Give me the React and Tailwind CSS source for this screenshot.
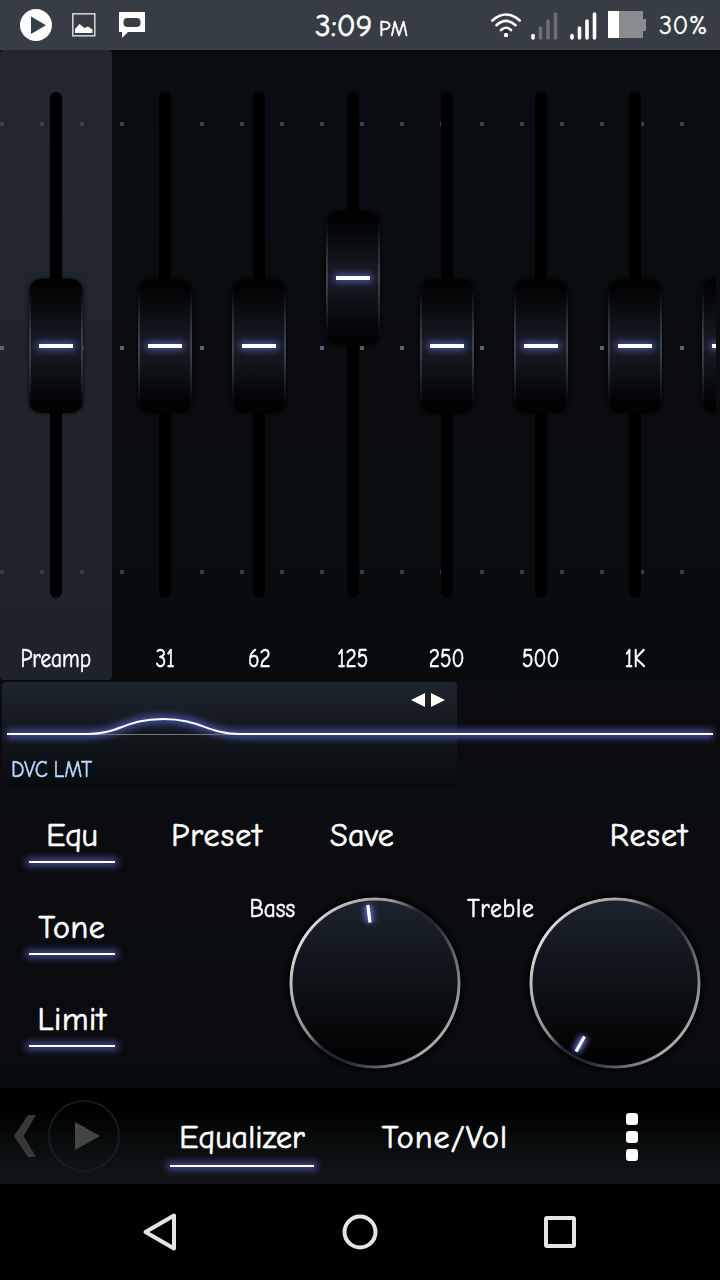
import React, { useState } from "react";

// The last band is scrolled half out of view, so it has no caption
const BANDS = [
  { label: "31", top: 186 },
  { label: "62", top: 186 },
  { label: "125", top: 118 },
  { label: "250", top: 186 },
  { label: "500", top: 186 },
  { label: "1K", top: 186 },
  { label: "", top: 186 },
];

const TOGGLES = [
  { name: "Equ", tracking: "tracking-[-0.3px]" },
  { name: "Tone", tracking: "tracking-[0.6px]" },
  { name: "Limit", tracking: "tracking-[0.6px]" },
];

const StatusBar = () => (
  <header className="flex h-[50px] shrink-0 items-center bg-[#373d44] text-white">
    <svg className="ml-5 h-[50px] w-[130px] shrink-0" viewBox="20 0 130 50">
      <circle cx="36" cy="25" r="16" fill="#fff" />
      <path d="M31 16.5v17.5l15-8.8z" fill="#373d44" />
      <rect x="72.8" y="13.8" width="22" height="22" fill="none" stroke="#ccd0d0" strokeWidth="1.6" />
      <path d="M75 33v-4l4.5-5 5 4 3.500-1.500 4.500 3V33z" fill="#fff" />
      <path d="M119 12h26v20H128l-6 6v-6h-3z" fill="#fff" />
      <rect x="123.500" y="18" width="17" height="9" rx="4" fill="#373d44" />
    </svg>
    <div className="ml-[165px] flex items-baseline pt-0.5 whitespace-nowrap">
      <span className="text-[31px] leading-none tracking-[0.2px] [-webkit-text-stroke:0.8px_white]">3:09</span>
      <span className="ml-[7px] origin-left scale-x-95 text-[22px] leading-none [-webkit-text-stroke:0.5px_white]">
        PM
      </span>
    </div>
    <div className="ml-auto flex items-center">
      <svg className="h-[50px] w-[160px]" viewBox="488 0 160 50">
        <g fill="none" stroke="#fff" strokeWidth="2.600" strokeLinecap="round">
          <path d="M492.300 20.500q13.700-12 27.400 0" />
          <path d="M496.500 25.200q9.500-8.500 19 0" />
          <path d="M501 30q5-4.500 10 0" />
        </g>
        <circle cx="506" cy="31.500" r="2.500" fill="#22262b" />
        <circle cx="506" cy="35" r="2.200" fill="#fff" />
        <g strokeWidth="3.600" strokeLinecap="round" stroke="#6a6e75">
          <path d="M533 35.500v2.500" stroke="#fff" />
          <path d="M540.500 28v10M548 21v17M555.500 14v24" />
        </g>
        <path
          d="M572 35.500v2.500M579.500 28v10M587 21v17M594.500 14v24"
          stroke="#fff"
          strokeWidth="3.600"
          strokeLinecap="round"
        />
        <path d="M608 11h35v8h3v12h-3v7h-35z" fill="#898d90" />
        <path d="M608 11h11v27h-11z" fill="#fff" />
      </svg>
      <span className="mr-3 ml-[11px] w-[49px] pt-0.5 text-[26px] leading-none tracking-[0.4px] whitespace-nowrap [-webkit-text-stroke:0.4px_white]">
        30%
      </span>
    </div>
  </header>
);

const Slider = ({ label, top }) => (
  <div className="relative flex h-full w-[94px] shrink-0 flex-col items-center pt-[42px]">
    <div className="h-[506px] w-3 shrink-0 rounded-full bg-black" />
    <button
      style={{ top: `${top + 43}px` }}
      className="absolute flex h-[134px] w-[54px] items-center justify-center rounded-[12px] bg-linear-to-b from-[#020202] via-[#181d26] to-[#020202] shadow-[0_0_4px_rgba(0,0,0,0.8)]"
    >
      <span className="absolute inset-y-[8px] left-0 w-[2px] bg-linear-to-b from-transparent via-[#3b434c] to-transparent" />
      <span className="absolute inset-y-[8px] right-0 w-[2px] bg-linear-to-b from-transparent via-[#3b434c] to-transparent" />
      <span className="h-1 w-[34px] bg-white shadow-[0_0_7px_2px_#4e559f]" />
    </button>
    <span className="mt-[45px] origin-center scale-x-[.79] text-[27px] leading-8 text-white [-webkit-text-stroke:0.6px_white]">
      {label}
    </span>
  </div>
);

const DotRow = ({ className }) => (
  <div
    className={`pointer-events-none absolute right-8 left-0 h-1 ${className}`}
  />
);

const Sliders = () => (
  <section className="relative flex h-[630px] shrink-0 bg-linear-to-b from-[#090d12] via-[#0a0c0f] to-[#080b0e]">
    <div className="absolute top-0 left-0 h-full w-28 rounded bg-linear-to-b from-[#21252e] via-[#20252d] to-[#1e222c]" />
    <DotRow className="top-[72px] bg-[repeating-linear-gradient(90deg,#35414f_0_4px,transparent_4px_40px)]" />
    <DotRow className="top-[296px] bg-[repeating-linear-gradient(90deg,#50657c_0_4px,transparent_4px_40px)]" />
    <DotRow className="top-[520px] bg-[repeating-linear-gradient(90deg,#303e4c_0_4px,transparent_4px_40px)]" />
    <div className="relative flex w-28 shrink-0 justify-center">
      <Slider label="Preamp" top={186} />
    </div>
    <div className="relative flex w-[604px] overflow-hidden pl-1.5">
      {BANDS.map((band, index) => (
        <Slider key={index} label={band.label} top={band.top} />
      ))}
    </div>
  </section>
);

const Curve = () => (
  <section className="relative flex h-[108px] shrink-0 flex-col bg-linear-to-b from-[#090c11] via-[#0b0b0f] to-[#090c10] pt-0.5 pl-0.5">
    <div className="flex h-[106px] w-[455px] flex-col justify-between rounded-t bg-linear-to-b from-[#1d252e] via-[#12171c] to-[#080b0e] pt-[11px] pr-3 pb-[5px] pl-[9px]">
      <svg className="h-[14px] w-[34px] self-end" viewBox="0 0 34 14" fill="#fff">
        <path d="M14 0v14L0 7zM20 0v14l14-7z" />
      </svg>
      <span className="origin-left scale-x-[.86] text-[25px] leading-7 whitespace-nowrap text-[#b8dcff] [word-spacing:-2px] [-webkit-text-stroke:0.4px_#b8dcff]">
        DVC LMT
      </span>
    </div>
    <svg className="absolute inset-0 h-[108px] w-full" viewBox="0 680 720 108" fill="none">
      <defs>
        <filter id="curveGlow" x="-20" y="700" width="760" height="60" filterUnits="userSpaceOnUse">
          <feGaussianBlur stdDeviation="3" />
        </filter>
      </defs>
      <path
        d="M7 734H88C120 734 125 719 163 719S207 734 240 734H713"
        stroke="#414a94"
        strokeWidth="9"
        filter="url(#curveGlow)"
      />
      <path d="M92 734.500h146" stroke="#777" strokeWidth="1" />
      <path d="M7 734H88C120 734 125 719 163 719S207 734 240 734H713" stroke="#fff" strokeWidth="2" />
    </svg>
  </section>
);

const Toggle = ({ children, active, onClick, tracking }) => (
  <button onClick={onClick} className="flex h-[92px] w-full flex-col items-center pt-[28px]">
    <span className={`h-[45px] text-[32px] leading-10 [-webkit-text-stroke:0.7px_white] ${tracking}`}>
      {children}
    </span>
    <span className={`h-0.5 w-[86px] ${active ? "bg-white shadow-[0_0_7px_3px_#454c92]" : ""}`} />
  </button>
);

const Dial = ({ id, label, labelClass, x1, y1, x2, y2 }) => (
  <div className="flex h-[184px] w-60 items-start justify-end pr-[13px]">
    <span
      className={`z-10 -mr-[12px] origin-right pt-[11px] text-[27px] leading-8 whitespace-nowrap [-webkit-text-stroke:0.6px_white] ${labelClass}`}
    >
      {label}
    </span>
    <svg className="mt-[9px] size-[184px] shrink-0" viewBox="-92 -92 184 184">
      <defs>
        <linearGradient id={`${id}Face`} x1="0" y1="0" x2="0" y2="1">
          <stop offset="0" stopColor="#1b232d" />
          <stop offset=".5" stopColor="#0e1217" />
          <stop offset=".9" stopColor="#030303" />
        </linearGradient>
        <filter id={`${id}Glow`} x="-100" y="-100" width="200" height="200" filterUnits="userSpaceOnUse">
          <feGaussianBlur stdDeviation="2.500" />
        </filter>
      </defs>
      <circle r="88" fill="#000" filter={`url(#${id}Glow)`} />
      <circle r="84" fill={`url(#${id}Face)`} />
      <foreignObject x="-86" y="-86" width="172" height="172">
        <div className="size-[172px] rounded-full bg-[conic-gradient(#aaa5a3_0deg,#99999a_12deg,#22272e_30deg,#23282f_45deg,#666a70_72deg,#999_100deg,#aaa_130deg,#aaa_145deg,#59616a_178deg,#1e2731_202deg,#222830_219deg,#8a8a8a_232deg,#c0c0c0_270deg,#e0e0e0_302deg,#bbb_338deg,#aaa5a3_360deg)] mask-[radial-gradient(circle,transparent_82px,black_83px,black_85px,transparent_86px)]" />
      </foreignObject>
      <line x1={x1} y1={y1} x2={x2} y2={y2} stroke="#5961b8" strokeWidth="9" filter={`url(#${id}Glow)`} />
      <line x1={x1} y1={y1} x2={x2} y2={y2} stroke="#fff" strokeWidth="3.200" />
    </svg>
  </div>
);

const Controls = () => {
  const [active, setActive] = useState({ Equ: true, Tone: true, Limit: true });

  const toggle = (name) => {
    setActive((prev) => ({ ...prev, [name]: !prev[name] }));
  };

  return (
    <section className="flex h-[300px] shrink-0 bg-[linear-gradient(#0a0d12,#0b0b0f_28%,#090c10_52%,#0b0b0f_80%,#070b0e)] text-white">
      <div className="w-36 shrink-0">
        {TOGGLES.map(({ name, tracking }) => (
          <Toggle key={name} tracking={tracking} active={active[name]} onClick={() => toggle(name)}>
            {name}
          </Toggle>
        ))}
      </div>
      <div className="flex-1">
        <div className="grid h-[92px] grid-cols-4 pt-[28px] text-center text-[32px] leading-10 [-webkit-text-stroke:0.7px_white]">
          <button className="h-10 pl-0.5 tracking-[1.2px]">Preset</button>
          <button className="h-10 pl-1 tracking-[0.3px]">Save</button>
          <button className="col-start-4 h-10 pl-0.5 tracking-[1.1px]">Reset</button>
        </div>
        <div className="mt-0.5 flex justify-end">
          <Dial id="bass" label="Bass" labelClass="scale-x-[.86]" x1={-7.2} y1={-78} x2={-5} y2={-60.5} />
          <Dial
            id="treble"
            label="Treble"
            labelClass="scale-x-[.88] tracking-[0.8px]"
            x1={-30.5}
            y1={53.5}
            x2={-39}
            y2={68.5}
          />
        </div>
      </div>
    </section>
  );
};

const BottomTabs = () => (
  <nav className="flex h-24 shrink-0 items-start bg-linear-to-b from-black via-[#080a0a] to-[#12161b] text-white">
    <svg className="h-24 w-[141px] shrink-0" viewBox="0 0 141 96">
      <path d="M28 27h8L23.500 48 36 69h-8L14 48z" fill="#383838" />
      <circle cx="84" cy="48" r="35" fill="none" stroke="#161a22" strokeWidth="2" />
      <path d="M75 34v28l25-14z" fill="#454545" />
    </svg>
    <button className="ml-[29px] flex w-36 flex-col items-center pt-[30px]">
      <span className="h-[47px] text-[32px] leading-10 tracking-[0.1px] [-webkit-text-stroke:0.7px_white]">
        Equalizer
      </span>
      <span className="h-0.5 w-full bg-white shadow-[0_0_7px_3px_#454c92]" />
    </button>
    <button className="ml-[58px] w-36 pt-[30px] pl-0.5 text-[32px] leading-10 tracking-[1.1px] [-webkit-text-stroke:0.7px_white]">
      Tone/Vol
    </button>
    <button className="ml-[110px] flex flex-col gap-1.5 pt-[25px]">
      <span className="size-3 rounded-[3px] bg-white" />
      <span className="size-3 rounded-[3px] bg-white" />
      <span className="size-3 rounded-[3px] bg-white" />
    </button>
  </nav>
);

const SystemNav = () => (
  <footer className="h-24 shrink-0 bg-black">
    <svg className="h-24 w-[720px]" viewBox="0 0 720 96" fill="none" stroke="#e5e5e5" strokeWidth="4">
      <path d="M174 31.500v33L145.500 48z" strokeLinejoin="round" />
      <circle cx="360" cy="48" r="15.500" />
      <rect x="546" y="34" width="28" height="28" rx="1" />
    </svg>
  </footer>
);

const App = () => (
  <main className="flex h-[1280px] w-[720px] flex-col overflow-hidden bg-black font-['Comic_Sans_MS','Comic_Neue',Lato,sans-serif]">
    <StatusBar />
    <Sliders />
    <Curve />
    <Controls />
    <BottomTabs />
    <SystemNav />
  </main>
);

export default App;
